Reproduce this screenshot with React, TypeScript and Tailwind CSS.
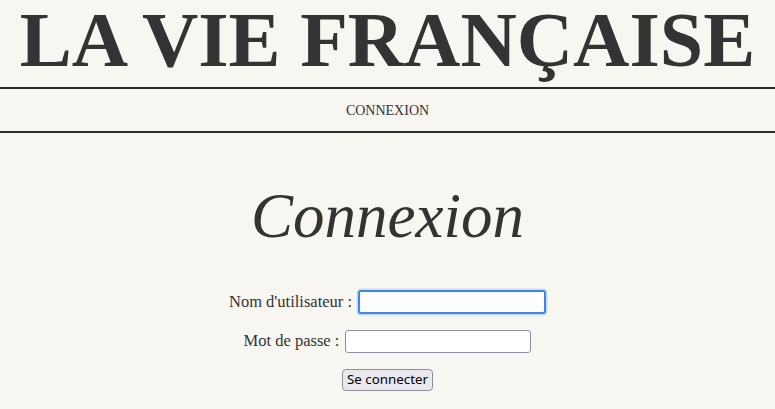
import { useState } from 'react';

export default function App() {
  const [username, setUsername] = useState('');
  const [password, setPassword] = useState('');

  return (
    <div className="min-h-screen bg-[#f8f6f1] text-[#333333] font-['Liberation_Serif',serif]">
      {/* En-tête du journal */}
      <header>
        <div className="flex h-[87px] justify-center">
          <h1 className="pt-[1px] text-[78px] leading-[78px] font-bold whitespace-nowrap">
            LA VIE FRANÇAISE
          </h1>
        </div>
        <nav className="flex h-[46px] items-center justify-center border-y-2 border-[#2b2b2b] text-[14px]">
          <a href="#" className="uppercase">
            Connexion
          </a>
        </nav>
      </header>

      <main className="flex flex-col items-center">
        <h2 className="mt-[52px] text-[63px] leading-none italic">Connexion</h2>

        <form
          className="mt-[42px] flex flex-col items-center gap-4"
          onSubmit={(e) => e.preventDefault()}
        >
          <div className="flex items-center gap-[6px]">
            <label htmlFor="username" className="text-[16.5px] leading-none">
              Nom d'utilisateur :
            </label>
            <input
              id="username"
              type="text"
              autoFocus
              value={username}
              onChange={(e) => setUsername(e.target.value)}
              className="h-[24px] w-[188px] rounded-[3px] border-2 border-[#3d86e6] bg-white px-[3px] text-[13px] shadow-[0_0_0_1.5px_#c6dbf5] outline-none"
            />
          </div>
          <div className="flex items-center gap-[6px]">
            <label htmlFor="password" className="text-[16.5px] leading-none">
              Mot de passe :
            </label>
            <input
              id="password"
              type="password"
              value={password}
              onChange={(e) => setPassword(e.target.value)}
              className="h-[23px] w-[186px] rounded-[3px] border border-[#8f8f9d] bg-white px-[3px] text-[13px] outline-none"
            />
          </div>
          <button
            type="submit"
            className="h-[22px] rounded-[4px] border border-[#8f8f9d] bg-[#e9e9ed] px-[4px] font-['Noto_Sans',sans-serif] text-[13.33px] leading-none text-black"
          >
            Se connecter
          </button>
        </form>
      </main>
    </div>
  );
}
